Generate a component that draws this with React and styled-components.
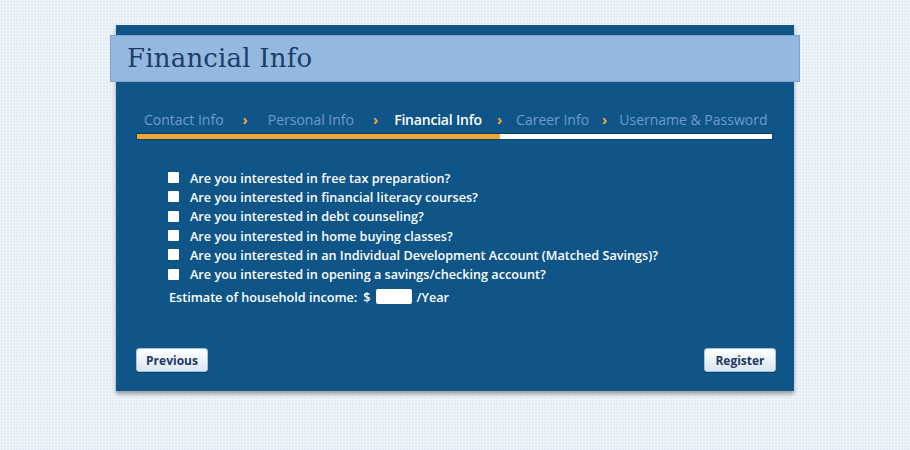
import React from "react";
import styled, { createGlobalStyle } from "styled-components";

const GlobalStyle = createGlobalStyle`
  html, body {
    margin: 0;
    padding: 0;
  }
  body {
    background-color: #e4ecf5;
    background-image:
      linear-gradient(rgba(255,255,255,0.35) 1px, transparent 1px),
      linear-gradient(90deg, rgba(255,255,255,0.35) 1px, transparent 1px);
    background-size: 3px 3px;
    font-family: "Open Sans", "Liberation Sans", sans-serif;
  }
`;

const Page = styled.div`
  width: 910px;
  height: 450px;
  padding-top: 25px;
  box-sizing: border-box;
  display: flex;
  justify-content: center;
`;

const Panel = styled.div`
  width: 678px;
  height: 366px;
  background: #0f5588;
  box-shadow: 0 3px 4px rgba(0, 0, 0, 0.35);
  padding-top: 10px;
  box-sizing: border-box;
  display: flex;
  flex-direction: column;
`;

const Header = styled.div`
  margin: 0 -6px;
  height: 47px;
  background: #95b8df;
  border: 1px solid #7fa3cf;
  box-sizing: border-box;
  display: flex;
  align-items: center;
  padding-left: 16px;
`;

const Title = styled.h1`
  margin: 0 0 2px;
  font-family: "DejaVu Serif", "Liberation Serif", serif;
  font-weight: normal;
  font-size: 26px;
  letter-spacing: 0.2px;
  color: #1c3d68;
`;

const Steps = styled.div`
  margin: 26px 21px 0 20px;
`;

const StepRow = styled.div`
  display: flex;
  align-items: center;
  padding-left: 8px;
  height: 22px;
`;

const Step = styled.span`
  font-size: 14px;
  font-weight: ${(p) => (p.$active ? 600 : 400)};
  letter-spacing: ${(p) => (p.$active ? "-0.2px" : "0")};
  color: ${(p) => (p.$active ? "#ffffff" : "#6f9bcc")};
  white-space: nowrap;
`;

const Chevron = styled.span`
  color: #f3aa35;
  font-size: 14px;
  font-weight: 700;
  margin: 0 ${(p) => p.$right}px 0 ${(p) => p.$left}px;
`;

const Progress = styled.div`
  margin-top: 3px;
  height: 5px;
  background: #ffffff;
  border: 1px solid #0b3e66;
  border-top-color: #0a3a60;
  display: flex;
`;

const ProgressFill = styled.div`
  background: #f2a735;
  height: 100%;
`;

const Questions = styled.div`
  margin: 28px 0 0 52px;
  display: flex;
  flex-direction: column;
`;

const QRow = styled.label`
  display: flex;
  align-items: center;
  height: 19.3px;
  color: #ffffff;
  font-size: 12.65px;
  font-weight: 600;
`;

const Box = styled.span`
  width: 11px;
  height: 11px;
  background: #ffffff;
  border-radius: 1px;
  margin-right: 11px;
  flex: none;
`;

const IncomeRow = styled.div`
  display: flex;
  align-items: center;
  margin-top: 4px;
  margin-left: 1px;
  color: #ffffff;
  font-size: 12.65px;
  font-weight: 600;
`;

const Dollar = styled.span`
  margin: 0 5px 0 6px;
`;

const IncomeInput = styled.span`
  width: 36px;
  height: 15px;
  background: #ffffff;
  border-radius: 2px;
  margin-right: 5px;
`;

const Footer = styled.div`
  margin-top: auto;
  margin-bottom: 19px;
  padding: 0 18px 0 20px;
  display: flex;
  justify-content: space-between;
`;

const Button = styled.button`
  width: 72px;
  height: 24px;
  padding: 0;
  border: 1px solid #a9c0dc;
  border-radius: 3px;
  background: linear-gradient(#ffffff, #dbe6f3);
  color: #1b3863;
  font-family: "Open Sans", "Liberation Sans", sans-serif;
  font-size: 12px;
  font-weight: 700;
  box-shadow: 0 1px 1px rgba(0, 0, 0, 0.25);
`;

const steps = [
  { label: "Contact Info", left: 19, right: 20 },
  { label: "Personal Info", left: 19, right: 16 },
  { label: "Financial Info", active: true, left: 15, right: 14 },
  { label: "Career Info", left: 13, right: 12 },
  { label: "Username & Password" },
];

const questions = [
  "Are you interested in free tax preparation?",
  "Are you interested in financial literacy courses?",
  "Are you interested in debt counseling?",
  "Are you interested in home buying classes?",
  "Are you interested in an Individual Development Account (Matched Savings)?",
  "Are you interested in opening a savings/checking account?",
];

export default function App() {
  return (
    <>
      <GlobalStyle />
      <Page>
        <Panel>
          <Header>
            <Title>Financial Info</Title>
          </Header>
          <Steps>
            <StepRow>
              {steps.map((s, i) => (
                <React.Fragment key={s.label}>
                  <Step $active={s.active}>{s.label}</Step>
                  {i < steps.length - 1 && (
                    <Chevron $left={s.left} $right={s.right}>›</Chevron>
                  )}
                </React.Fragment>
              ))}
            </StepRow>
            <Progress>
              <ProgressFill style={{ width: "57.2%" }} />
            </Progress>
          </Steps>
          <Questions>
            {questions.map((q) => (
              <QRow key={q}>
                <Box />
                {q}
              </QRow>
            ))}
            <IncomeRow>
              Estimate of household income:
              <Dollar>$</Dollar>
              <IncomeInput />
              /Year
            </IncomeRow>
          </Questions>
          <Footer>
            <Button>Previous</Button>
            <Button>Register</Button>
          </Footer>
        </Panel>
      </Page>
    </>
  );
}
